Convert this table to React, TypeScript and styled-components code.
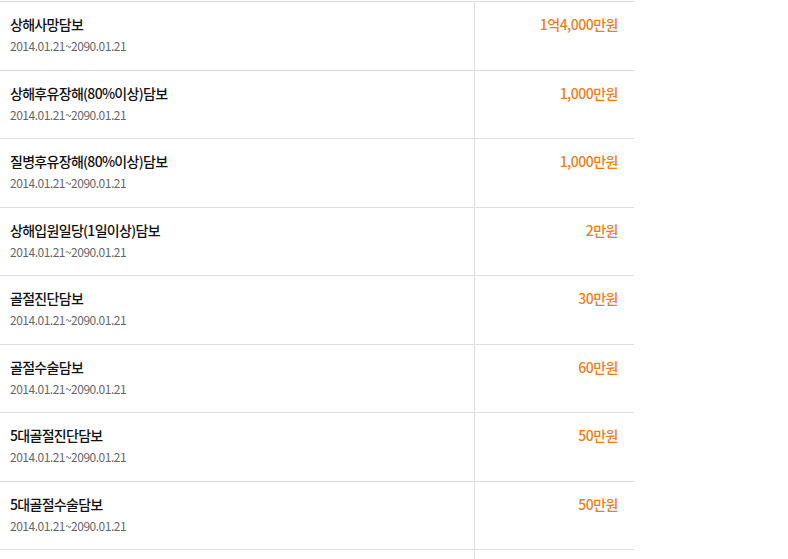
import styled, { createGlobalStyle } from 'styled-components'

// 전역 스타일
const GlobalStyle = createGlobalStyle`
  body {
    margin: 0;
    background: #fff;
    font-family: "Noto Sans CJK KR", "Noto Sans", sans-serif;
  }
`

const coverages = [
  { name: '상해사망담보', amount: '1억4,000만원' },
  { name: '상해후유장해(80%이상)담보', amount: '1,000만원' },
  { name: '질병후유장해(80%이상)담보', amount: '1,000만원' },
  { name: '상해입원일당(1일이상)담보', amount: '2만원' },
  { name: '골절진단담보', amount: '30만원' },
  { name: '골절수술담보', amount: '60만원' },
  { name: '5대골절진단담보', amount: '50만원' },
  { name: '5대골절수술담보', amount: '50만원' },
]

// UI元件
const App = () => {
  return (
    <>
      <GlobalStyle />
      <Table>
        {coverages.map((item) => (
          <Row key={item.name}>
            <NameCell>
              <Title>{item.name}</Title>
              <Period>2014.01.21~2090.01.21</Period>
            </NameCell>
            <AmountCell>{item.amount}</AmountCell>
          </Row>
        ))}
        <Row $last>
          <NameCell />
          <AmountCell />
        </Row>
      </Table>
    </>
  )
}

// UI元件樣式
const Table = styled.div`
  width: 634px;
  margin-top: 1px;
  border-top: 1px solid #dddddd;
`

const Row = styled.div<{ $last?: boolean }>`
  display: grid;
  grid-template-columns: 474px 160px;
  height: ${(p) => (p.$last ? '20px' : '67.5px')};
  border-bottom: ${(p) => (p.$last ? 'none' : '1px solid #dddddd')};
`

const NameCell = styled.div`
  padding: 12px 0 0 10px;
`

const Title = styled.div`
  font-size: 14px;
  font-weight: 500;
  line-height: 20px;
  color: #111;
  letter-spacing: -0.7px;
`

const Period = styled.div`
  margin-top: 3px;
  font-size: 12px;
  line-height: 18px;
  color: #666;
  letter-spacing: -0.5px;
`

const AmountCell = styled.div`
  border-left: 1px solid #dddddd;
  padding: 12px 16px 0 0;
  text-align: right;
  font-size: 14px;
  font-weight: 500;
  line-height: 20px;
  color: #f07d1a;
  letter-spacing: -0.5px;
`

export default App
